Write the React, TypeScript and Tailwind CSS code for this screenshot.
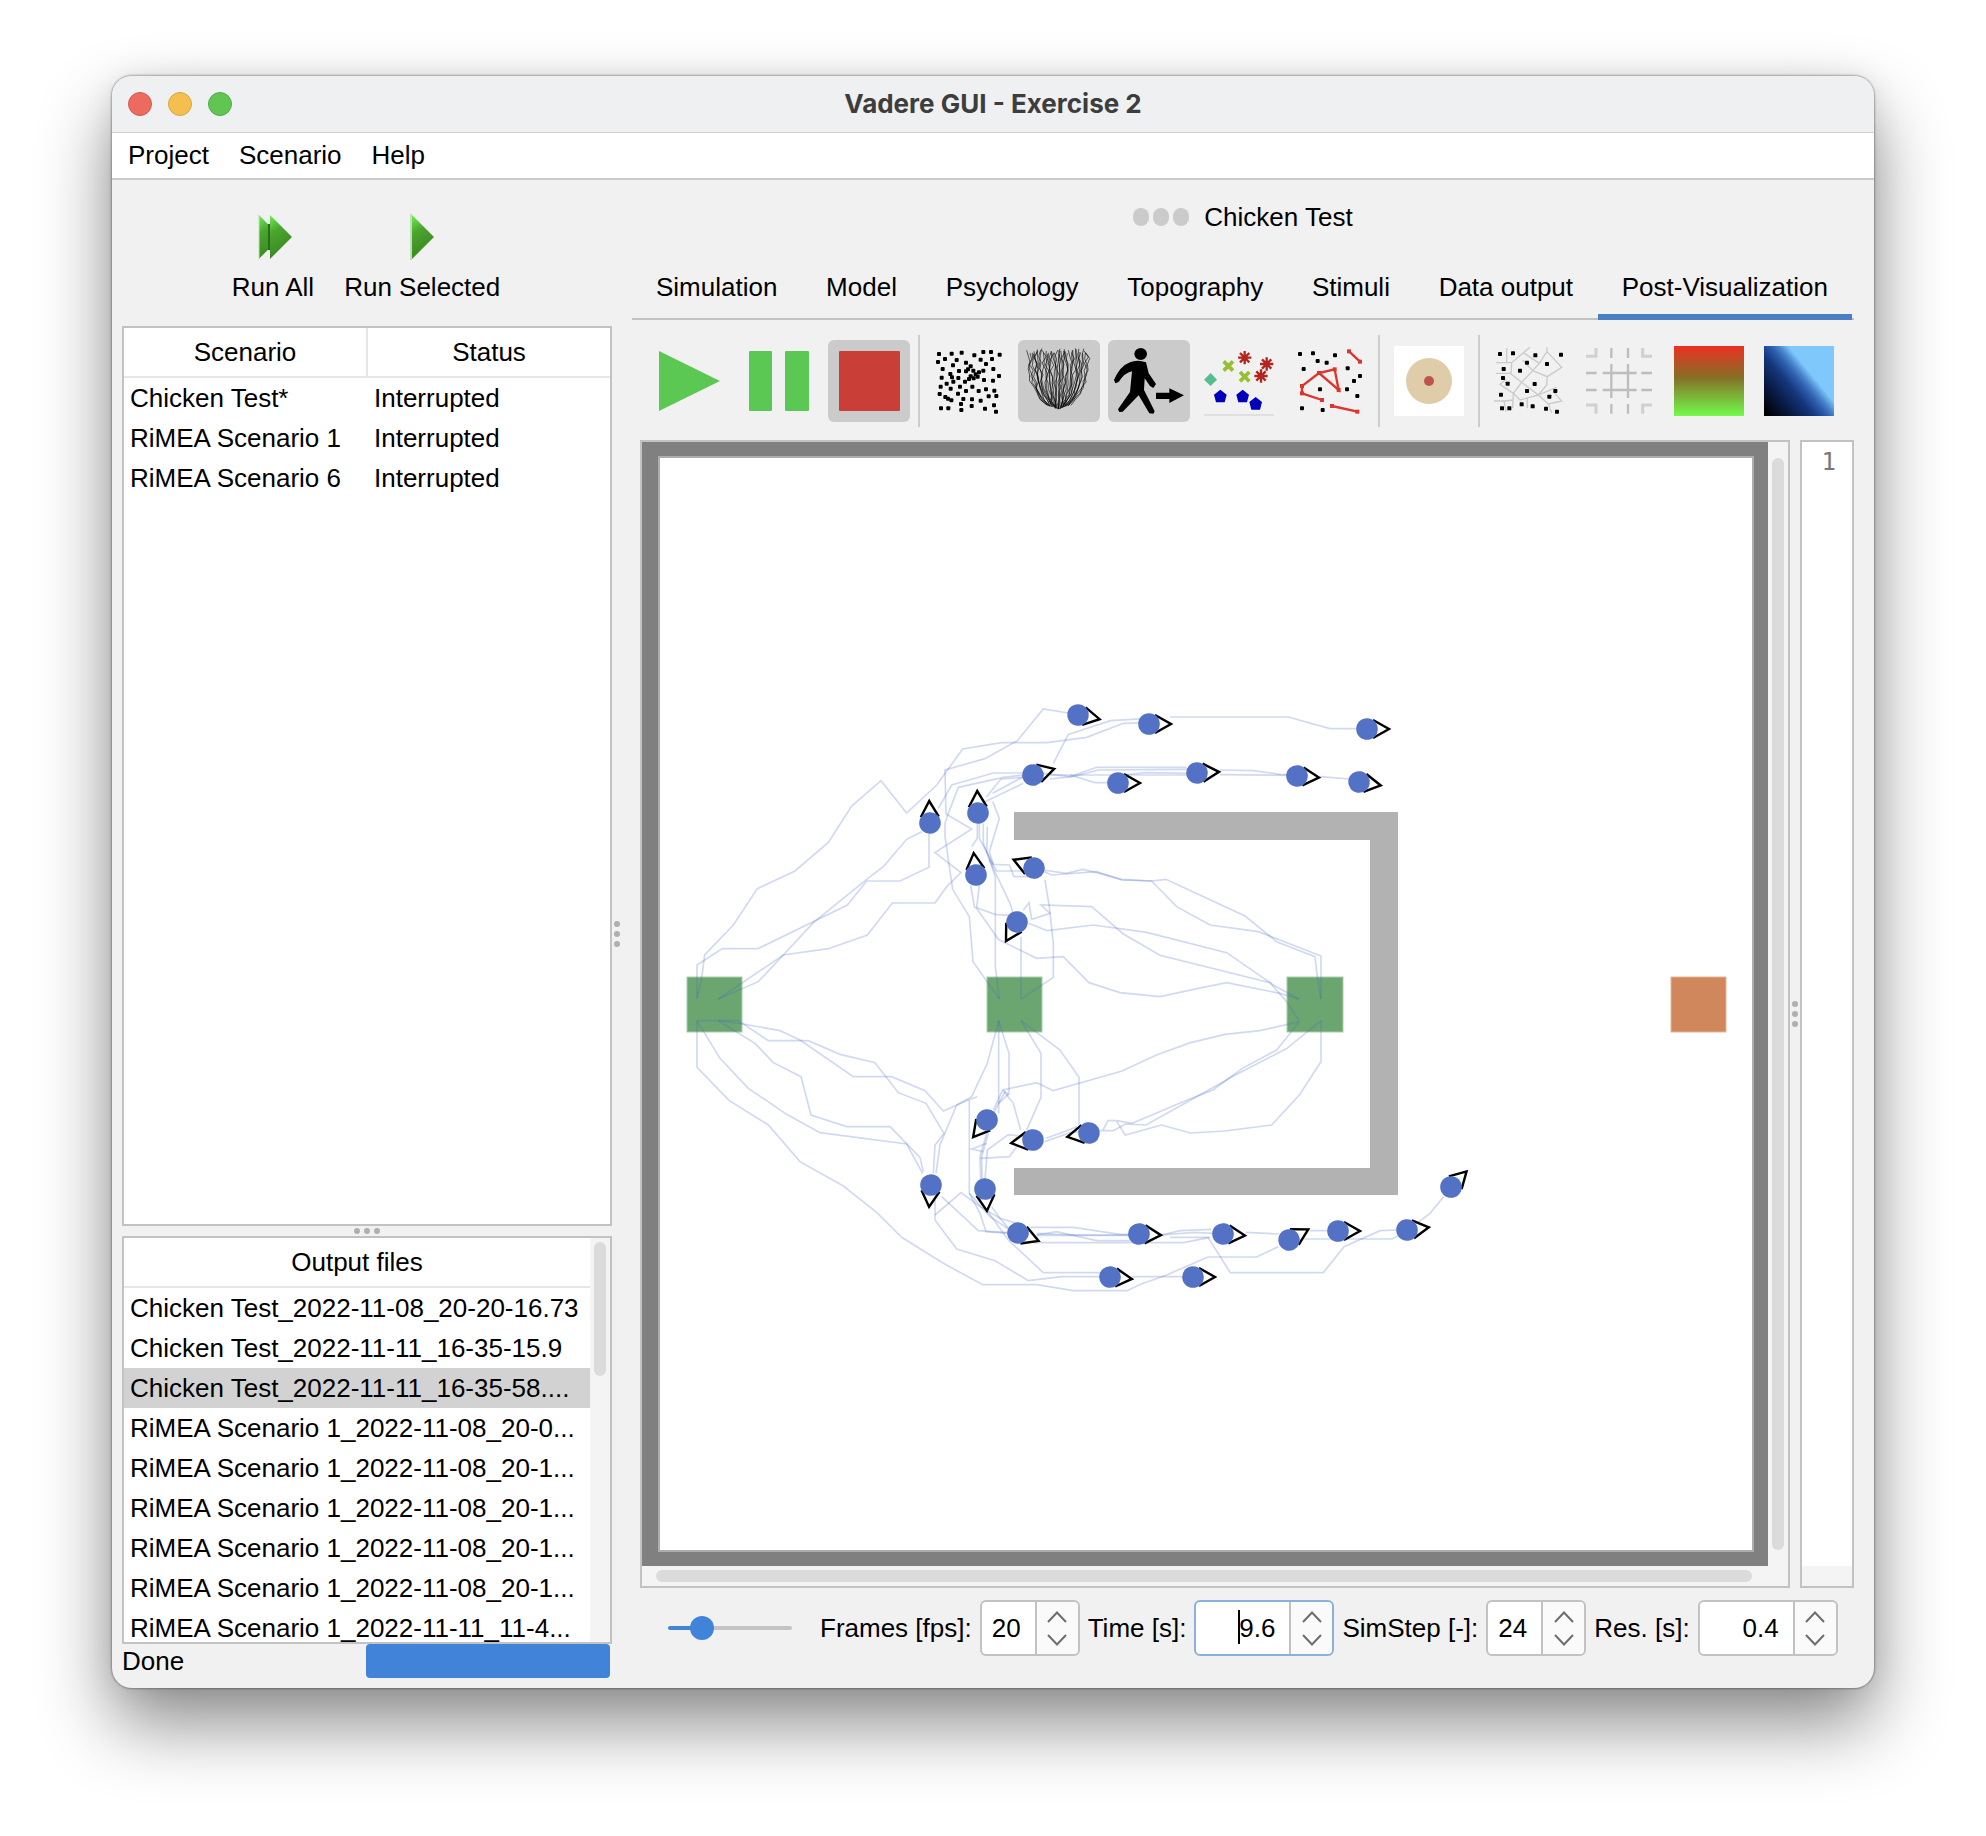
import React from "react";

const SCENARIOS: [string, string][] = [
  ["Chicken Test*", "Interrupted"],
  ["RiMEA Scenario 1", "Interrupted"],
  ["RiMEA Scenario 6", "Interrupted"],
];

const OUTPUT_FILES = [
  "Chicken Test_2022-11-08_20-20-16.73",
  "Chicken Test_2022-11-11_16-35-15.9",
  "Chicken Test_2022-11-11_16-35-58....",
  "RiMEA Scenario 1_2022-11-08_20-0...",
  "RiMEA Scenario 1_2022-11-08_20-1...",
  "RiMEA Scenario 1_2022-11-08_20-1...",
  "RiMEA Scenario 1_2022-11-08_20-1...",
  "RiMEA Scenario 1_2022-11-08_20-1...",
  "RiMEA Scenario 1_2022-11-11_11-4...",
];

const TABS = ["Simulation", "Model", "Psychology", "Topography", "Stimuli", "Data output", "Post-Visualization"];

/* Agents: x, y, heading in degrees */
const AGENTS: [number, number, number][] = [
  [1078, 715, 11], [1149, 724, 0], [1367, 729, 0], [1033, 775, -16], [1118, 783, 0],
  [1197, 773, -3], [1297, 776, 4], [1359, 782, 9], [930, 823, -92], [978, 813, -92],
  [976, 875, -96], [1034, 868, -158], [1017, 922, 120], [987, 1120, 129], [1033, 1140, 172],
  [1089, 1133, 170], [931, 1185, 95], [985, 1189, 85], [1018, 1233, 21], [1139, 1234, 3],
  [1223, 1234, 4], [1289, 1240, -29], [1338, 1231, 0], [1407, 1230, -7], [1451, 1187, -45],
  [1110, 1277, 5], [1193, 1277, 0],
];

/* Walked paths in the upper half, in thirds of a canvas unit */
const UPPER_TRACES = [
  "171,955 171,855 247,806 354,806 622,675 680,603 780,603 867,562 867,460",
  "171,955 183,905 188,872 194,825 280,735 352,626 465,573 565,487 635,378 723,302 800,399 890,315 968,207 1085,188 1220,188 1340,172 1450,130 1527,128",
  "235,957 355,905 430,825 520,728 680,598 730,560 800,478 845,455",
  "235,957 430,825 565,806 682,765 757,669 885,669 920,620 963,578 885,518 995,447 918,402 915,270 1035,236 1132,182 1210,87 1285,99",
  "895,385 935,315 1060,279 1150,279",
  "1150,285 1090,292 955,322 925,400 915,430 915,470 938,628 988,710 999,845 1078,957",
  "1078,957 1066,860 1066,590 1040,515 1042,440",
  "1143,957 1240,892 1240,790 1228,680 1215,600",
  "1143,957 1143,770",
  "1240,250 1285,163 1412,122 1527,115",
  "1590,111 1945,111 2070,146 2150,146",
  "1040,350 1083,297 1150,292",
  "1035,365 1150,310",
  "1058,340 1150,290",
  "1210,280 1290,290 1370,262 1640,262",
  "1230,285 1650,285",
  "1230,297 1300,290 1375,270 1650,268",
  "1290,285 1365,308 1410,308",
  "1440,285 1520,278 1650,280",
  "1740,270 1840,272 1920,283 1975,285",
  "1740,284 1960,286",
  "2040,290 2130,297",
  "1058,365 1078,415 1048,515 1060,553 1108,555 1122,590 1165,590",
  "1012,430 1012,475 995,500",
  "1018,430 1018,475 1060,553",
  "1030,430 1030,490 1050,540 1070,573 1150,573",
  "992,615 1003,680 1010,685 1075,778 1190,835 1270,830 1347,908 1440,938 1560,950 1675,925 1760,908 1920,940 1977,957",
  "1018,615 1010,683 1065,703 1110,706",
  "1048,540 1110,670 1118,695",
  "1165,730 1222,752 1360,735 1520,757 1760,818 1900,915 1977,957",
  "1150,690 1167,668 1175,718 1230,700 1203,675 1355,680 1450,762 1560,826 1890,908 1940,965 1977,1022",
  "1210,570 1280,580 1328,568 1370,578 1445,598 1535,603 1578,598 1815,708 1910,785 2025,830 2032,890 2043,957",
  "1190,565 1235,585 1370,575 1445,600 1535,603 1610,680 1710,735 1855,755 2043,828 2043,957",
];

/* Walked paths in the lower half */
const LOWER_TRACES = [
  "171,62 171,202 268,302 385,375 480,485 610,558 710,637 785,712 910,790 1028,854 1190,854 1300,872 1461,872 1502,853 1580,825 1704,771 1850,771 1915,740",
  "171,62 240,175 325,265 440,343 540,398 800,432 848,520",
  "171,62 295,62 385,122 505,122 600,163 705,188 775,278 858,310 912,400 885,435 880,520",
  "235,62 345,130 400,188 483,230 513,345 620,380 750,380 840,472 850,515",
  "235,62 310,72 420,92 480,120 640,230 755,230 855,272 910,333 990,298 1012,290",
  "1076,62 1042,190 995,290 950,315 900,435 888,520",
  "1076,62 1076,340",
  "1076,62 1107,160 1107,280 1076,310",
  "1143,62 1203,160 1203,292 1160,390",
  "1143,62 1260,150 1317,232 1317,385",
  "1060,330 1088,270 1190,248 1240,272 1446,213 1549,165 1652,128 1755,103 1859,92 1978,65",
  "1088,270 1120,310 1142,390",
  "1060,340 1095,275 1107,285",
  "988,300 988,580 1020,640 1038,695 1105,700",
  "1040,400 1020,470 1022,540",
  "1045,400 1025,470 1026,540",
  "1022,475 1108,470 1130,440",
  "1035,540 1042,450 1105,404 1150,410",
  "1040,430 995,447 1030,455",
  "885,600 885,660 950,747 1065,782 1165,842 1265,830 1380,830",
  "885,645 963,578 1020,620 1080,655 1130,670",
  "905,590 1015,692 1105,698",
  "1040,630 1105,720 1210,818 1385,818",
  "988,580 1050,650 1110,690",
  "1055,620 1080,655 1110,690",
  "1170,682 1300,682 1440,703 1480,703",
  "1190,700 1300,705 1480,705",
  "1190,706 1480,706",
  "1180,728 1631,728 1710,712",
  "1190,705 1250,695 1370,722 1470,722",
  "1564,705 1621,692 1714,688",
  "1564,705 1662,697 1720,700",
  "1590,712 1704,712 1771,818 2050,818 2112,740 2220,692 2272,690",
  "1817,697 1916,702",
  "2009,692 2070,692",
  "1993,717 2256,717 2290,700",
  "2330,670 2370,640 2411,590",
  "1477,830 1631,830",
  "1978,65 1910,150 1807,205 1719,270 1642,300 1523,350 1476,370 1430,362 1404,362 1389,390",
  "2043,62 1941,145 1786,225 1647,303 1518,375 1456,372 1420,392 1378,392",
  "2043,62 2043,185 1978,285 1895,375 1755,393 1652,399 1564,375 1456,405 1430,365",
  "1213,425 1291,398 1320,395",
  "1218,415 1260,400 1311,380",
];

function SimulationCanvas() {
  return (
    <svg viewBox="642 442 1126 1124" className="block h-full w-full" preserveAspectRatio="none" role="img" aria-label="Simulation topography">
      <rect x="642" y="442" width="1126" height="1124" fill="#808080" />
      <rect x="658" y="456" width="1096" height="1096" fill="#adadad" />
      <rect x="660" y="458" width="1092" height="1092" fill="#ffffff" />
      <path d="M1014 812H1398V1195H1014V1168H1370V840H1014Z" fill="#b2b2b2" />
      <g fill="#6ba56f" stroke="#a9cdaa" strokeWidth="1">
        <rect x="687" y="977" width="55" height="55" />
        <rect x="987" y="977" width="55" height="55" />
        <rect x="1287" y="977" width="56" height="55" />
      </g>
      <rect x="1671" y="977" width="55" height="55" fill="#d0875b" stroke="#e3b799" />
      <g fill="none" stroke="#4a6cc6" strokeOpacity="0.26" strokeWidth="5">
        <g transform="translate(640 680) scale(0.33333)">
          {UPPER_TRACES.map((p, i) => <polyline key={i} points={p} />)}
        </g>
        <g transform="translate(640 1000) scale(0.33333)">
          {LOWER_TRACES.map((p, i) => <polyline key={i} points={p} />)}
        </g>
      </g>
      {AGENTS.map(([x, y, a], i) => (
        <g key={i} transform={`translate(${x} ${y}) rotate(${a})`}>
          <path d="M6 -9L22 0L6 9" fill="none" stroke="#000" strokeWidth="2.4" />
          <circle r="10.8" fill="#5371c5" />
        </g>
      ))}
    </svg>
  );
}

const DOTS: [number, number][] = [
  [60, 72], [98, 71], [128, 68], [78, 87], [57, 96], [113, 90], [102, 106], [71, 117], [193, 66], [216, 66], [242, 74], [166, 76], [185, 89], [219, 87], [201, 102], [141, 98], [155, 109], [120, 123], [141, 124], [163, 122], [193, 122], [223, 117], [240, 138], [222, 152], [195, 150], [176, 140], [180, 127], [155, 139], [150, 147], [164, 145], [138, 155], [118, 144], [94, 132], [99, 142], [68, 143], [83, 161], [103, 155], [65, 170], [95, 176], [117, 191], [141, 183], [123, 170], [160, 170], [179, 183], [201, 178], [226, 182], [232, 198], [209, 199], [185, 212], [159, 208], [133, 207], [126, 222], [97, 211], [79, 201], [87, 206], [62, 192], [66, 235], [88, 235], [127, 240], [158, 228], [198, 236], [225, 226], [231, 245], [170, 133], [147, 118],
];

function DotsIcon() {
  return (
    <svg viewBox="45 48 210 210" className="h-[70px] w-[70px]" aria-hidden="true">
      {DOTS.map(([x, y], i) => <rect key={i} x={x - 6} y={y - 6} width="12" height="12" rx="3" />)}
    </svg>
  );
}

/* Deterministic wobble in the range -1..1 */
function wobble(n: number) {
  const s = Math.sin(n * 127.1) * 43758.5453;
  return (s - Math.floor(s)) * 2 - 1;
}

function TrajectoriesIcon() {
  const strands: string[] = [];
  for (let i = 0; i < 44; i++) {
    const t = (i / 43) * 2 - 1;
    const top = 64 + wobble(i + 1) * 9;
    let d = "";
    for (let k = 0; k <= 9; k++) {
      const y = top + ((238 - Math.abs(t) * 12 - top) * k) / 9;
      const depth = Math.min(1, Math.max(0, (y - 110) / 130));
      const spread = 88 * (1 - depth * depth * depth * 0.8) * (1 - depth * 0.12);
      const x = 415 + t * spread + wobble(i * 13 + k * 7) * 7 * (1 - depth * 0.4);
      d += `${k ? "L" : "M"}${x.toFixed(1)} ${y.toFixed(1)}`;
    }
    strands.push(d);
  }
  return (
    <svg viewBox="312 48 210 210" className="h-[70px] w-[70px]" aria-hidden="true">
      <g fill="none" stroke="#000" strokeWidth="2.6" strokeOpacity="0.7">
        {strands.map((d, i) => <path key={i} d={d} />)}
      </g>
    </svg>
  );
}

function WalkerIcon() {
  return (
    <svg viewBox="582 48 210 210" className="h-[70px] w-[70px]" aria-hidden="true">
      <ellipse cx="662" cy="72" rx="19" ry="18" />
      <path d="M630 97Q652 88 678 97L686 130L708 162L700 174L690 168L674 145L672 180L704 244L700 251L688 250L656 196L608 245L598 246L594 238L630 186L636 124Q614 128 596 156L586 160L582 150Q600 108 630 97Z" />
      <path d="M708 188H748V175L792 196L748 219V207H708Z" />
    </svg>
  );
}

function GroupsIcon() {
  const star = (x: number, y: number) => `M${x} ${y - 20}V${y + 20}M${x - 20} ${y}H${x + 20}M${x - 14} ${y - 14}L${x + 14} ${y + 14}M${x + 14} ${y - 14}L${x - 14} ${y + 14}`;
  const cross = (x: number, y: number) => `M${x - 14} ${y - 14}L${x + 14} ${y + 14}M${x + 14} ${y - 14}L${x - 14} ${y + 14}`;
  const penta = (x: number, y: number) => `M${x} ${y - 20}L${x + 19} ${y - 5}L${x + 13} ${y + 18}H${x - 13}L${x - 19} ${y - 5}Z`;
  return (
    <svg viewBox="852 48 210 210" className="h-[70px] w-[70px]" aria-hidden="true">
      <path d={star(974, 83) + star(1040, 102) + star(1023, 138)} stroke="#b3261e" strokeWidth="7" />
      <path d={cross(925, 108) + cross(974, 140)} stroke="#96c032" strokeWidth="11" />
      <path d="M872 129L891 149L872 168L852 149Z" fill="#54bf8c" />
      <path d={penta(901, 199) + penta(968, 199) + penta(1007, 221)} fill="#0000bb" />
      <path d="M852 255H1062" stroke="#e0e0e0" strokeWidth="6" />
    </svg>
  );
}

function ContactsIcon() {
  const dots = [[1140, 72], [1179, 70], [1193, 93], [1220, 98], [1245, 76], [1151, 117], [1283, 115], [1320, 138], [1302, 153], [1281, 178], [1312, 198], [1200, 178], [1146, 235], [1208, 240]];
  const nodes = [[1287, 64], [1320, 95], [1197, 129], [1244, 118], [1256, 180], [1146, 168], [1146, 190], [1206, 210], [1236, 228], [1312, 245]];
  return (
    <svg viewBox="1122 48 210 210" className="h-[70px] w-[70px]" aria-hidden="true">
      {dots.map(([x, y], i) => <rect key={i} x={x - 6} y={y - 6} width="12" height="12" rx="3" />)}
      <path d="M1287 64L1320 95M1197 129L1244 118L1256 180L1197 129L1146 168V190L1206 210M1236 228L1312 245" fill="none" stroke="#dd352c" strokeWidth="7" />
      {nodes.map(([x, y], i) => <rect key={i} x={x - 6} y={y - 6} width="12" height="12" fill="#dd352c" />)}
    </svg>
  );
}

function VoronoiIcon() {
  const dots = [[360, 72], [399, 70], [466, 76], [543, 74], [441, 98], [501, 102], [420, 122], [371, 117], [369, 144], [383, 161], [464, 162], [441, 183], [526, 183], [508, 200], [363, 194], [425, 223], [458, 229], [498, 236], [531, 245], [366, 235], [388, 235]];
  return (
    <svg viewBox="342 48 210 210" className="h-[70px] w-[70px]" aria-hidden="true">
      <path
        d="M380 54V98M348 98H395L450 52M395 98L393 132L425 157L458 122L428 90M430 68L478 100L501 65V52M501 65L545 112L502 140L458 122M478 100L458 122M502 140L500 165L475 195L425 157L400 190L360 163L378 148M348 130H393M400 190L398 235M342 213H372L378 245M400 190L420 210L475 195L505 222L545 213L520 185M442 205V235M505 222L515 248M475 195L530 172M372 213L400 210"
        fill="none" stroke="#cacaca" strokeWidth="4"
      />
      {dots.map(([x, y], i) => <rect key={i} x={x - 6} y={y - 6} width="12" height="12" rx="2" />)}
    </svg>
  );
}

function GridIcon() {
  return (
    <svg viewBox="612 48 210 210" className="h-[70px] w-[70px]" aria-hidden="true" fill="none">
      <path d="M618 79H648V54M788 54V79H816M618 225H648V251M788 251V225H816" stroke="#d0d0d0" strokeWidth="9" />
      <path d="M694 54V84M744 54V84M694 222V251M744 222V251M618 129H650M784 129H816M618 180H650M784 180H816M694 102V204M744 102V204M668 129H770M668 180H770" stroke="#bdbdbd" strokeWidth="7" />
    </svg>
  );
}

function PersonalSpaceIcon() {
  return (
    <svg viewBox="42 48 210 210" className="h-[70px] w-[70px] bg-white" aria-hidden="true">
      <circle cx="147" cy="153" r="69" fill="#dfcca8" />
      <circle cx="147" cy="153" r="15" fill="#c0524e" />
    </svg>
  );
}

function GradientIcon() {
  return <span className="block h-[70px] w-[70px] bg-[linear-gradient(to_bottom,#ed3024,#856f26_45%,#72fb4b)]" />;
}

function PotentialIcon() {
  return (
    <svg viewBox="0 0 70 70" className="h-[70px] w-[70px]" aria-hidden="true">
      <defs>
        <linearGradient id="potential" gradientUnits="userSpaceOnUse" x1="0" y1="70" x2="49" y2="30">
          <stop offset="0.05" stopColor="#000000" />
          <stop offset="0.4" stopColor="#0b1f4c" />
          <stop offset="0.62" stopColor="#15377e" />
          <stop offset="0.78" stopColor="#2d5fae" />
          <stop offset="0.88" stopColor="#4a86cc" />
          <stop offset="1" stopColor="#7ec8fb" />
        </linearGradient>
      </defs>
      <rect width="70" height="70" fill="url(#potential)" />
    </svg>
  );
}

function PlayIcon() {
  return (
    <svg viewBox="0 0 70 70" className="h-[70px] w-[70px]" aria-hidden="true">
      <path d="M5 5L66 35L5 65Z" fill="#5bc854" />
    </svg>
  );
}

function PauseIcon() {
  return (
    <svg viewBox="0 0 70 70" className="h-[70px] w-[70px]" aria-hidden="true" fill="#5bc854">
      <rect x="5" y="5" width="23" height="60" rx="1" />
      <rect x="41" y="5" width="24" height="60" rx="1" />
    </svg>
  );
}

function StopIcon() {
  return (
    <svg viewBox="0 0 70 70" className="h-[70px] w-[70px]" aria-hidden="true">
      <rect x="5" y="5" width="61" height="60" rx="1" fill="#c93f38" />
    </svg>
  );
}

function ToolButton({ label, pressed, children }: { label: string; pressed?: boolean; children: React.ReactNode }) {
  return (
    <button
      type="button"
      aria-label={label}
      aria-pressed={!!pressed}
      className={"flex h-[82px] w-[82px] shrink-0 items-center justify-center rounded-md " + (pressed ? "bg-[#cbcbcb]" : "")}
    >
      {children}
    </button>
  );
}

function ToolSeparator() {
  return <span className="-my-1 h-[92px] w-[2px] shrink-0 bg-[#cdcdcd]" />;
}

function Grip({ vertical }: { vertical?: boolean }) {
  return (
    <div className={"flex shrink-0 items-center justify-center gap-1 " + (vertical ? "w-[10px] flex-col" : "h-[10px]")}>
      <span className="size-[6px] rounded-full bg-[#afafaf]" />
      <span className="size-[6px] rounded-full bg-[#afafaf]" />
      <span className="size-[6px] rounded-full bg-[#afafaf]" />
    </div>
  );
}

function Spinner({ id, label, value, width, focused }: { id: string; label: string; value: string; width: string; focused?: boolean }) {
  return (
    <div className="ml-2 flex shrink-0 items-center gap-2">
      <label htmlFor={id} className="whitespace-nowrap">{label}</label>
      <div className={"relative flex h-14 rounded-md border-2 bg-white " + width + (focused ? " border-[#8cb0dc]" : " border-[#c2c2c2]")}>
        <input id={id} type="text" inputMode="decimal" defaultValue={value} className="h-full w-0 min-w-0 flex-1 rounded-l-md bg-transparent pr-[14px] text-right outline-none" />
        {focused && <span className="absolute top-2 left-[42px] h-[34px] w-[2px] bg-black" />}
        <div className="flex w-[43px] flex-col rounded-r-md border-l-2 border-[#c2c2c2] bg-[#fafafa]">
          <button type="button" aria-label={"Increase " + label} className="flex flex-1 items-end justify-center pb-[5px]">
            <svg viewBox="0 0 20 12" className="h-3 w-5" fill="none" stroke="#6e6e6e" strokeWidth="2"><path d="M1 11L10 1.5L19 11" /></svg>
          </button>
          <button type="button" aria-label={"Decrease " + label} className="flex flex-1 items-start justify-center pt-[6px]">
            <svg viewBox="0 0 20 12" className="h-3 w-5" fill="none" stroke="#6e6e6e" strokeWidth="2"><path d="M1 1L10 10.5L19 1" /></svg>
          </button>
        </div>
      </div>
    </div>
  );
}

function RunGradient({ id }: { id: string }) {
  return (
    <defs>
      <linearGradient id={id} x1="0" y1="0" x2="0.3" y2="1">
        <stop offset="0" stopColor="#6ff04f" />
        <stop offset="0.4" stopColor="#4aa52f" />
        <stop offset="1" stopColor="#39871f" />
      </linearGradient>
    </defs>
  );
}

export default function App() {
  return (
    <div className="flex min-h-screen flex-col bg-white px-28 pt-[76px] pb-[148px] font-['Liberation_Sans',Arial,sans-serif] text-[26px] leading-10 text-black">
      <div className="flex flex-1 flex-col overflow-hidden rounded-[20px] bg-[#f1f1f1] shadow-[0_0_2px_1px_rgba(0,0,0,0.3),0_36px_72px_rgba(0,0,0,0.46),0_0_30px_rgba(0,0,0,0.08)]">
        <header className="flex h-[57px] shrink-0 items-center gap-4 border-b border-[#d3d3d3] bg-[#eef0f2] px-4">
          <button type="button" aria-label="Close" className="size-6 rounded-full border border-[#d65a50] bg-[#ec6a5e]" />
          <button type="button" aria-label="Minimize" className="size-6 rounded-full border border-[#dba53f] bg-[#f4bf4f]" />
          <button type="button" aria-label="Zoom" className="size-6 rounded-full border border-[#50ac43] bg-[#61c554]" />
          <h1 className="flex-1 pr-[120px] text-center font-[Inter,sans-serif] text-[26px] font-bold text-[#3d3d3d]">Vadere GUI - Exercise 2</h1>
        </header>

        <nav className="flex h-[47px] shrink-0 items-center gap-[30px] border-b-2 border-[#cbcbcb] bg-white px-4 pb-[2px]">
          <button type="button">Project</button>
          <button type="button">Scenario</button>
          <button type="button">Help</button>
        </nav>

        <div className="grid flex-1 grid-cols-[minmax(0,520fr)_minmax(0,1242fr)]">
          <aside className="flex pr-[10px] pl-[10px]">
            <div className="flex min-w-0 flex-1 flex-col pb-[10px]">
              <div className="flex h-[146px] shrink-0 items-start justify-center gap-[30px] pt-[34px] pr-[2px]">
                <button type="button" className="flex flex-col items-center gap-[7px]">
                  <svg viewBox="0 0 34 46" className="ml-1 h-[46px] w-[34px]" aria-hidden="true">
                    <RunGradient id="runAll" />
                    <path d="M1 1L23 23L1 45Z" fill="url(#runAll)" stroke="#bfe0b6" />
                    <path d="M11 10V36" stroke="#2c6b1a" strokeWidth="2" />
                    <path d="M12 1L34 23L12 45Z" fill="url(#runAll)" />
                  </svg>
                  <span>Run All</span>
                </button>
                <button type="button" className="flex flex-col items-center gap-[7px]">
                  <svg viewBox="0 0 24 46" className="h-[46px] w-6" aria-hidden="true">
                    <RunGradient id="runSelected" />
                    <path d="M1 0V46" stroke="#bfe0b6" strokeWidth="2" />
                    <path d="M2 1L24 23L2 45Z" fill="url(#runSelected)" />
                  </svg>
                  <span>Run Selected</span>
                </button>
              </div>

              <section className="min-h-[300px] flex-1 border-2 border-[#c2c2c2] bg-white">
                <table className="w-full table-fixed border-collapse">
                  <thead>
                    <tr className="h-[49px] border-b-2 border-[#e6e6e6]">
                      <th className="border-r-2 border-[#e6e6e6] font-normal">Scenario</th>
                      <th className="font-normal">Status</th>
                    </tr>
                  </thead>
                  <tbody>
                    {SCENARIOS.map(([name, status]) => (
                      <tr key={name} className="h-10">
                        <td className="pl-[6px]">{name}</td>
                        <td className="pl-[7px]">{status}</td>
                      </tr>
                    ))}
                  </tbody>
                </table>
              </section>

              <Grip />

              <section className="flex h-[408px] shrink-0 overflow-hidden border-2 border-[#c2c2c2] bg-white">
                <table className="flex-1 table-fixed border-collapse self-start">
                  <thead>
                    <tr className="h-[49px] border-b-2 border-[#e6e6e6]">
                      <th className="font-normal">Output files</th>
                    </tr>
                  </thead>
                  <tbody>
                    {OUTPUT_FILES.map((name, i) => (
                      <tr key={i} className={"h-10 " + (i === 2 ? "bg-[#d2d2d2]" : "")}>
                        <td className="pl-[6px] whitespace-nowrap">{name}</td>
                      </tr>
                    ))}
                  </tbody>
                </table>
                <div className="w-5 shrink-0 bg-[#f4f4f4] p-1">
                  <div className="h-[134px] rounded-full bg-[#dbdbdb]" />
                </div>
              </section>

              <div className="flex shrink-0 items-center">
                <span id="progress-label" className="flex-1 leading-[34px]">Done</span>
                <div role="progressbar" aria-labelledby="progress-label" aria-valuenow={100} className="mr-[2px] h-[34px] w-[244px] rounded-sm bg-[#4083d9]" />
              </div>
            </div>
            <Grip vertical />
          </aside>

          <main className="flex min-w-0 flex-col pr-5">
            <div className="flex h-[74px] shrink-0 items-center justify-center gap-[15px]">
              <span className="flex gap-1">
                <span className="h-[18px] w-4 rounded-lg bg-[#cbcbcb]" />
                <span className="h-[18px] w-4 rounded-lg bg-[#cbcbcb]" />
                <span className="h-[18px] w-4 rounded-lg bg-[#cbcbcb]" />
              </span>
              <h2>Chicken Test</h2>
            </div>

            <div role="tablist" className="flex h-[66px] shrink-0 justify-between pr-[2px] shadow-[inset_0_-2px_0_#c2c2c2]">
              {TABS.map((tab) => (
                <button
                  key={tab}
                  type="button"
                  role="tab"
                  aria-selected={tab === "Post-Visualization"}
                  className={"h-full px-6 whitespace-nowrap " + (tab === "Post-Visualization" ? "shadow-[inset_0_-6px_0_#4b7fc4]" : "")}
                >
                  {tab}
                </button>
              ))}
            </div>

            <div role="toolbar" className="flex h-[120px] shrink-0 items-center gap-2 pt-[2px] pl-4">
              <ToolButton label="Play"><PlayIcon /></ToolButton>
              <ToolButton label="Pause"><PauseIcon /></ToolButton>
              <ToolButton label="Stop" pressed><StopIcon /></ToolButton>
              <ToolSeparator />
              <ToolButton label="Show pedestrians"><DotsIcon /></ToolButton>
              <ToolButton label="Show trajectories" pressed><TrajectoriesIcon /></ToolButton>
              <ToolButton label="Show walking direction" pressed><WalkerIcon /></ToolButton>
              <ToolButton label="Show groups"><GroupsIcon /></ToolButton>
              <ToolButton label="Show contacts"><ContactsIcon /></ToolButton>
              <ToolSeparator />
              <ToolButton label="Show personal space"><PersonalSpaceIcon /></ToolButton>
              <ToolSeparator />
              <ToolButton label="Show Voronoi diagram"><VoronoiIcon /></ToolButton>
              <ToolButton label="Show grid"><GridIcon /></ToolButton>
              <ToolButton label="Show density"><GradientIcon /></ToolButton>
              <ToolButton label="Show potential field"><PotentialIcon /></ToolButton>
            </div>

            <div className="flex flex-1 pl-2">
              <section className="grid min-w-0 flex-1 grid-cols-[minmax(0,1fr)_20px] grid-rows-[minmax(0,1fr)_20px] border-2 border-[#c2c2c2] bg-[#f4f4f4]">
                <SimulationCanvas />
                <div className="flex justify-center pt-4 pb-4">
                  <div className="w-3 rounded-full bg-[#dbdbdb]" />
                </div>
                <div className="flex items-center pr-4 pl-[14px]">
                  <div className="h-3 flex-1 rounded-full bg-[#dbdbdb]" />
                </div>
              </section>
              <Grip vertical />
              <section className="flex w-[54px] shrink-0 flex-col border-2 border-[#c2c2c2] bg-white">
                <span className="flex-1 pr-4 text-right font-['DejaVu_Sans_Mono',monospace] text-2xl leading-10 text-[#777777]">1</span>
                <span className="h-5 bg-[#f4f4f4]" />
              </section>
            </div>

            <div className="flex h-[100px] shrink-0 items-start pt-3 pl-9">
              <div className="mr-5 flex h-14 items-center">
                <input
                  type="range"
                  aria-label="Playback speed"
                  min={0}
                  max={100}
                  defaultValue={22}
                  className="h-6 w-[124px] appearance-none bg-transparent [&::-webkit-slider-runnable-track]:h-1 [&::-webkit-slider-runnable-track]:rounded-full [&::-webkit-slider-runnable-track]:bg-[linear-gradient(to_right,#4083d9_28%,#c4c4c4_28%)] [&::-webkit-slider-thumb]:-mt-[10px] [&::-webkit-slider-thumb]:size-6 [&::-webkit-slider-thumb]:appearance-none [&::-webkit-slider-thumb]:rounded-full [&::-webkit-slider-thumb]:bg-[#4083d9]"
                />
              </div>
              <Spinner id="fps" label="Frames [fps]:" value="20" width="w-[100px]" />
              <Spinner id="time" label="Time [s]:" value="9.6" width="w-[140px]" focused />
              <Spinner id="step" label="SimStep [-]:" value="24" width="w-[100px]" />
              <Spinner id="res" label="Res. [s]:" value="0.4" width="w-[140px]" />
            </div>
          </main>
        </div>
      </div>
    </div>
  );
}
